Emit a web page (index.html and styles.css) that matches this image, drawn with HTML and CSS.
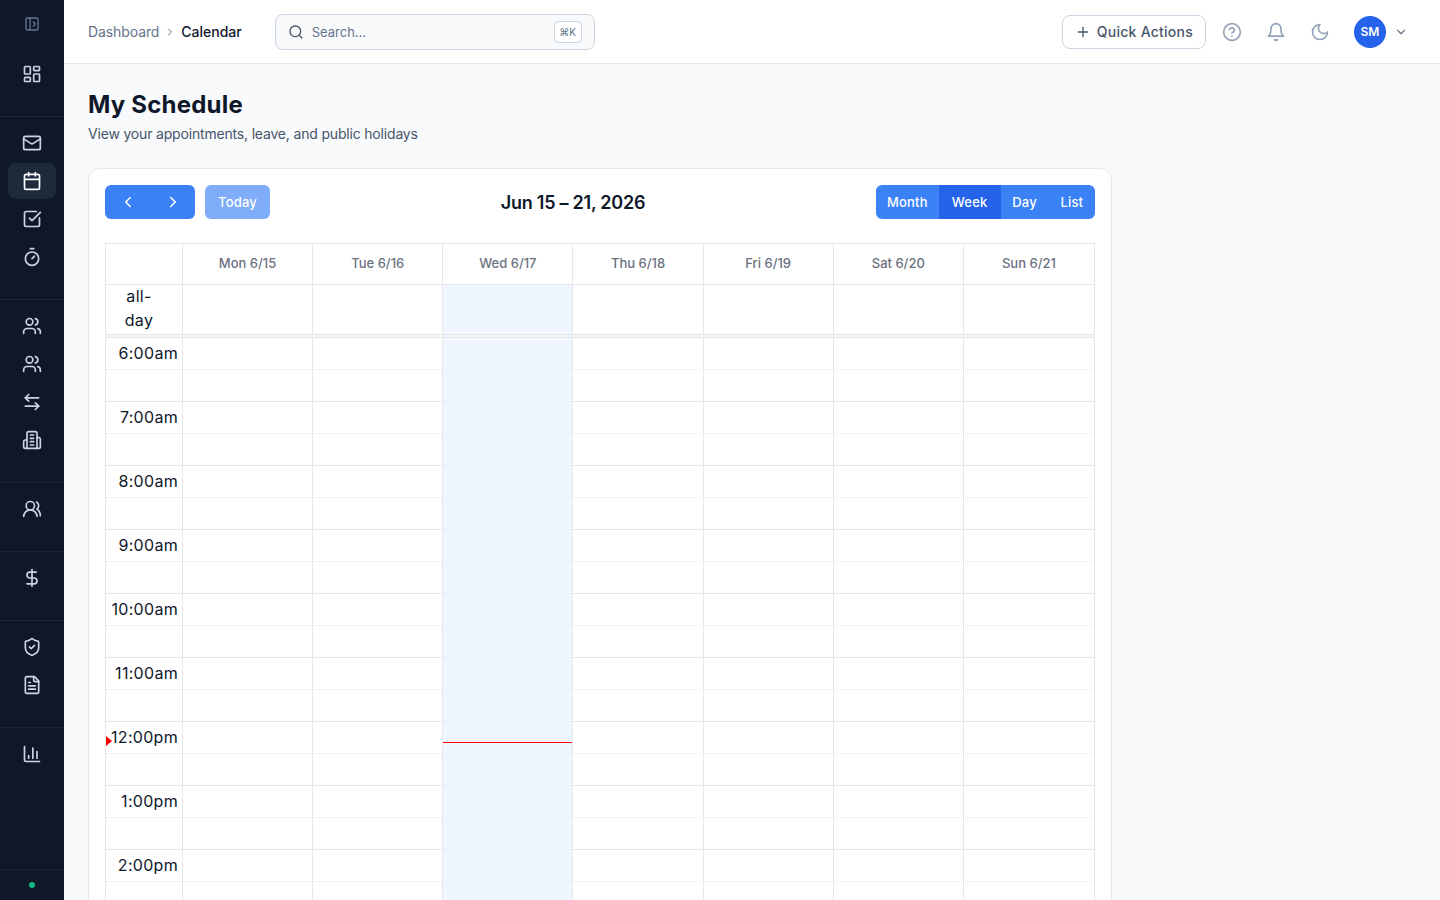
FILE: index.html
```html
<!DOCTYPE html>
<html lang="en">
<head>
    <meta charset="UTF-8">
    <meta name="viewport" content="width=device-width, initial-scale=1.0">
    <title>My Schedule</title>
    <link rel="stylesheet" href="styles.css">
</head>
<body>
    <aside class="sidebar">
        <div class="sidebar-top">
            <svg class="icon toggle-icon" viewBox="0 0 24 24"><rect x="3" y="3" width="18" height="18" rx="2"/><path d="M9 3v18"/><path d="m14 9 3 3-3 3"/></svg>
        </div>
        <nav class="sidebar-nav">
            <div class="nav-group">
                <a class="nav-item"><svg class="icon" viewBox="0 0 24 24"><rect x="3" y="3" width="7" height="9" rx="1"/><rect x="14" y="3" width="7" height="5" rx="1"/><rect x="14" y="12" width="7" height="9" rx="1"/><rect x="3" y="16" width="7" height="5" rx="1"/></svg></a>
            </div>
            <div class="nav-group">
                <a class="nav-item"><svg class="icon" viewBox="0 0 24 24"><rect x="2" y="4" width="20" height="16" rx="2"/><path d="m22 7-8.97 5.7a1.94 1.94 0 0 1-2.06 0L2 7"/></svg></a>
                <a class="nav-item active"><svg class="icon" viewBox="0 0 24 24"><path d="M8 2v4"/><path d="M16 2v4"/><rect x="3" y="4" width="18" height="18" rx="2"/><path d="M3 10h18"/></svg></a>
                <a class="nav-item"><svg class="icon" viewBox="0 0 24 24"><path d="M21 10.656V19a2 2 0 0 1-2 2H5a2 2 0 0 1-2-2V5a2 2 0 0 1 2-2h12.344"/><path d="m9 11 3 3L22 4"/></svg></a>
                <a class="nav-item"><svg class="icon" viewBox="0 0 24 24"><path d="M10 2h4"/><path d="m12 14 3-3"/><circle cx="12" cy="14" r="8"/></svg></a>
            </div>
            <div class="nav-group">
                <a class="nav-item"><svg class="icon" viewBox="0 0 24 24"><path d="M16 21v-2a4 4 0 0 0-4-4H6a4 4 0 0 0-4 4v2"/><circle cx="9" cy="7" r="4"/><path d="M22 21v-2a4 4 0 0 0-3-3.87"/><path d="M16 3.13a4 4 0 0 1 0 7.75"/></svg></a>
                <a class="nav-item"><svg class="icon" viewBox="0 0 24 24"><path d="M16 21v-2a4 4 0 0 0-4-4H6a4 4 0 0 0-4 4v2"/><circle cx="9" cy="7" r="4"/><path d="M22 21v-2a4 4 0 0 0-3-3.87"/><path d="M16 3.13a4 4 0 0 1 0 7.75"/></svg></a>
                <a class="nav-item"><svg class="icon" viewBox="0 0 24 24"><path d="M8 3 4 7l4 4"/><path d="M4 7h16"/><path d="m16 21 4-4-4-4"/><path d="M20 17H4"/></svg></a>
                <a class="nav-item"><svg class="icon" viewBox="0 0 24 24"><path d="M6 22V4a2 2 0 0 1 2-2h8a2 2 0 0 1 2 2v18Z"/><path d="M6 12H4a2 2 0 0 0-2 2v6a2 2 0 0 0 2 2h2"/><path d="M18 9h2a2 2 0 0 1 2 2v9a2 2 0 0 1-2 2h-2"/><path d="M10 6h4"/><path d="M10 10h4"/><path d="M10 14h4"/><path d="M10 18h4"/></svg></a>
            </div>
            <div class="nav-group">
                <a class="nav-item"><svg class="icon" viewBox="0 0 24 24"><path d="M18 21a8 8 0 0 0-16 0"/><circle cx="10" cy="8" r="5"/><path d="M22 20c0-3.37-2-6.5-4-8a5 5 0 0 0-.45-8.3"/></svg></a>
            </div>
            <div class="nav-group">
                <a class="nav-item"><svg class="icon" viewBox="0 0 24 24"><path d="M12 2v20"/><path d="M17 5H9.5a3.5 3.5 0 0 0 0 7h5a3.5 3.5 0 0 1 0 7H6"/></svg></a>
            </div>
            <div class="nav-group">
                <a class="nav-item"><svg class="icon" viewBox="0 0 24 24"><path d="M20 13c0 5-3.5 7.5-7.66 8.95a1 1 0 0 1-.67-.01C7.5 20.5 4 18 4 13V6a1 1 0 0 1 1-1c2 0 4.5-1.2 6.24-2.72a1.17 1.17 0 0 1 1.52 0C14.51 3.81 17 5 19 5a1 1 0 0 1 1 1z"/><path d="m9 12 2 2 4-4"/></svg></a>
                <a class="nav-item"><svg class="icon" viewBox="0 0 24 24"><path d="M15 2H6a2 2 0 0 0-2 2v16a2 2 0 0 0 2 2h12a2 2 0 0 0 2-2V7Z"/><path d="M14 2v4a2 2 0 0 0 2 2h4"/><path d="M10 9H8"/><path d="M16 13H8"/><path d="M16 17H8"/></svg></a>
            </div>
            <div class="nav-group last">
                <a class="nav-item"><svg class="icon" viewBox="0 0 24 24"><path d="M3 3v16a2 2 0 0 0 2 2h16"/><path d="M18 17V9"/><path d="M13 17V5"/><path d="M8 17v-3"/></svg></a>
            </div>
        </nav>
        <div class="sidebar-footer"><span class="status-dot"></span></div>
    </aside>

    <div class="page">
        <header class="topbar">
            <div class="breadcrumb">
                <span class="crumb">Dashboard</span>
                <svg class="icon crumb-sep" viewBox="0 0 24 24"><path d="m9 18 6-6-6-6"/></svg>
                <span class="crumb-current">Calendar</span>
            </div>
            <div class="search">
                <svg class="icon search-icon" viewBox="0 0 24 24"><circle cx="11" cy="11" r="8"/><path d="m21 21-4.3-4.3"/></svg>
                <span class="search-text">Search...</span>
                <kbd class="search-key">⌘K</kbd>
            </div>
            <div class="topbar-right">
                <button class="quick-actions">
                    <svg class="icon" viewBox="0 0 24 24"><path d="M5 12h14"/><path d="M12 5v14"/></svg>
                    Quick Actions
                </button>
                <div class="icon-buttons">
                    <span class="icon-button"><svg class="icon" viewBox="0 0 24 24"><circle cx="12" cy="12" r="10"/><path d="M9.09 9a3 3 0 0 1 5.83 1c0 2-3 3-3 3"/><path d="M12 17h.01"/></svg></span>
                    <span class="icon-button"><svg class="icon" viewBox="0 0 24 24"><path d="M6 8a6 6 0 0 1 12 0c0 7 3 9 3 9H3s3-2 3-9"/><path d="M10.3 21a1.94 1.94 0 0 0 3.4 0"/></svg></span>
                    <span class="icon-button"><svg class="icon" viewBox="0 0 24 24"><path d="M12 3a6 6 0 0 0 9 9 9 9 0 1 1-9-9Z"/></svg></span>
                </div>
                <div class="user-menu">
                    <span class="avatar">SM</span>
                    <svg class="icon user-chevron" viewBox="0 0 24 24"><path d="m6 9 6 6 6-6"/></svg>
                </div>
            </div>
        </header>

        <main class="content">
            <h1 class="page-title">My Schedule</h1>
            <p class="page-subtitle">View your appointments, leave, and public holidays</p>

            <section class="card">
                <div class="toolbar">
                    <div class="toolbar-left">
                        <div class="btn-group">
                            <button class="btn btn-arrow"><svg class="icon" viewBox="0 0 24 24"><path d="m15 18-6-6 6-6"/></svg></button>
                            <button class="btn btn-arrow"><svg class="icon" viewBox="0 0 24 24"><path d="m9 18 6-6-6-6"/></svg></button>
                        </div>
                        <button class="btn btn-today">Today</button>
                    </div>
                    <h2 class="toolbar-title">Jun 15 – 21, 2026</h2>
                    <div class="btn-group">
                        <button class="btn btn-month">Month</button>
                        <button class="btn btn-active">Week</button>
                        <button class="btn">Day</button>
                        <button class="btn">List</button>
                    </div>
                </div>

                <div class="calendar">
                    <div class="cal-row cal-head">
                        <div class="cal-cell"></div>
                        <div class="cal-cell">Mon 6/15</div>
                        <div class="cal-cell">Tue 6/16</div>
                        <div class="cal-cell">Wed 6/17</div>
                        <div class="cal-cell">Thu 6/18</div>
                        <div class="cal-cell">Fri 6/19</div>
                        <div class="cal-cell">Sat 6/20</div>
                        <div class="cal-cell">Sun 6/21</div>
                    </div>
                    <div class="cal-row cal-allday">
                        <div class="cal-cell"><div class="allday-label">all-day</div></div>
                        <div class="cal-cell"></div>
                        <div class="cal-cell"></div>
                        <div class="cal-cell today"></div>
                        <div class="cal-cell"></div>
                        <div class="cal-cell"></div>
                        <div class="cal-cell"></div>
                        <div class="cal-cell"></div>
                    </div>
                    <div class="cal-divider"></div>
                    <div class="time-grid">
                        <div class="slot"><span class="slot-label">6:00am</span></div>
                        <div class="slot slot-minor"></div>
                        <div class="slot"><span class="slot-label">7:00am</span></div>
                        <div class="slot slot-minor"></div>
                        <div class="slot"><span class="slot-label">8:00am</span></div>
                        <div class="slot slot-minor"></div>
                        <div class="slot"><span class="slot-label">9:00am</span></div>
                        <div class="slot slot-minor"></div>
                        <div class="slot"><span class="slot-label">10:00am</span></div>
                        <div class="slot slot-minor"></div>
                        <div class="slot"><span class="slot-label">11:00am</span></div>
                        <div class="slot slot-minor"></div>
                        <div class="slot"><span class="slot-label">12:00pm</span></div>
                        <div class="slot slot-minor"></div>
                        <div class="slot"><span class="slot-label">1:00pm</span></div>
                        <div class="slot slot-minor"></div>
                        <div class="slot"><span class="slot-label">2:00pm</span></div>
                        <div class="slot slot-minor"></div>

                        <!-- columns sit over the slot rows -->
                        <div class="cal-row col-overlay">
                            <div class="cal-cell"></div>
                            <div class="cal-cell"></div>
                            <div class="cal-cell"></div>
                            <div class="cal-cell today"><div class="now-line"></div></div>
                            <div class="cal-cell"></div>
                            <div class="cal-cell"></div>
                            <div class="cal-cell"></div>
                            <div class="cal-cell"></div>
                        </div>
                        <div class="now-arrow"></div>
                    </div>
                </div>
            </section>
        </main>
    </div>
</body>
</html>
```

FILE: styles.css
```css
* {
    box-sizing: border-box;
}
body {
    margin: 0;
    height: 100vh;
    display: flex;
    overflow: hidden;
    font-family: Inter, "Noto Sans", sans-serif;
    color: #0f172a;
    background-color: #f8fafc;
}
.icon {
    width: 20px;
    height: 20px;
    fill: none;
    stroke: currentColor;
    stroke-width: 2;
    stroke-linecap: round;
    stroke-linejoin: round;
    flex-shrink: 0;
}

/* Sidebar */
.sidebar {
    width: 64px;
    flex-shrink: 0;
    display: flex;
    flex-direction: column;
    background-color: #0f182b;
    color: #cbd5e1;
}
.sidebar-top {
    height: 48px;
    display: flex;
    justify-content: center;
    align-items: center;
}
.toggle-icon {
    width: 16px;
    height: 16px;
    color: #64748b;
}
.sidebar-nav {
    flex: 1;
}
.nav-group {
    display: flex;
    flex-direction: column;
    gap: 2px;
    padding: 8px 8px 24px;
    border-bottom: 1px solid #1c2739;
}
.nav-group.last {
    border-bottom: none;
}
.nav-item {
    height: 36px;
    display: flex;
    justify-content: center;
    align-items: center;
    border-radius: 8px;
}
.nav-item.active {
    background-color: #1e293b;
    color: #fff;
}
.sidebar-footer {
    height: 31px;
    display: flex;
    justify-content: center;
    align-items: center;
    border-top: 1px solid #1c2739;
}
.status-dot {
    width: 6px;
    height: 6px;
    border-radius: 50%;
    background-color: #10b981;
}

/* Topbar */
.page {
    flex: 1;
    min-width: 0;
}
.topbar {
    height: 64px;
    display: flex;
    align-items: center;
    padding: 0 24px;
    background-color: #fff;
    border-bottom: 1px solid #e2e8f0;
}
.breadcrumb {
    display: flex;
    align-items: center;
    gap: 5px;
    font-size: 14px;
    margin-right: 33px;
}
.crumb {
    color: #64748b;
    letter-spacing: -0.1px;
}
.crumb-sep {
    width: 12px;
    height: 12px;
    color: #64748b;
}
.crumb-current {
    font-weight: 500;
}
.search {
    width: 320px;
    height: 36px;
    display: flex;
    align-items: center;
    gap: 8px;
    padding: 0 12px;
    background-color: #f8fafc;
    border: 1px solid #cbd5e1;
    border-radius: 8px;
    font-size: 13px;
    color: #64748b;
}
.search-icon {
    width: 16px;
    height: 16px;
    color: #475569;
}
.search-text {
    flex: 1;
}
.search-key {
    width: 28px;
    height: 22px;
    display: flex;
    justify-content: center;
    align-items: center;
    font-family: Inter, sans-serif;
    font-size: 10px;
    background-color: #fff;
    border: 1px solid #cbd5e1;
    border-radius: 4px;
}
.topbar-right {
    margin-left: auto;
    display: flex;
    align-items: center;
}
.quick-actions {
    height: 34px;
    display: flex;
    align-items: center;
    gap: 6px;
    padding: 0 12px;
    font-family: inherit;
    font-size: 14px;
    font-weight: 500;
    letter-spacing: 0.25px;
    color: #475569;
    background-color: #fff;
    border: 1px solid #cbd5e1;
    border-radius: 8px;
}
.quick-actions .icon {
    width: 16px;
    height: 16px;
}
.icon-buttons {
    display: flex;
    gap: 8px;
    margin-left: 8px;
}
.icon-button {
    width: 36px;
    height: 36px;
    display: flex;
    justify-content: center;
    align-items: center;
    color: #94a3b8;
}
.user-menu {
    display: flex;
    align-items: center;
    gap: 8px;
    margin-left: 8px;
    padding: 0 8px;
}
.avatar {
    width: 32px;
    height: 32px;
    display: flex;
    justify-content: center;
    align-items: center;
    border-radius: 50%;
    background-color: #2563eb;
    color: #fff;
    font-size: 12px;
    font-weight: 600;
}
.user-chevron {
    width: 14px;
    height: 14px;
    color: #64748b;
}

/* Content */
.content {
    padding: 25px 24px 24px;
}
.page-title {
    margin: 0;
    font-size: 24px;
    line-height: 32px;
    font-weight: 700;
    letter-spacing: 0.2px;
}
.page-subtitle {
    margin: 3px 0 24px;
    font-size: 14px;
    line-height: 20px;
    letter-spacing: -0.18px;
    color: #475569;
}
.card {
    max-width: 1024px;
    padding: 16px;
    background-color: #fff;
    border: 1px solid #e2e8f0;
    border-radius: 12px;
}
.toolbar {
    display: flex;
    justify-content: space-between;
    align-items: center;
    margin-bottom: 24px;
}
.toolbar-left {
    display: flex;
    gap: 10px;
}
.toolbar-title {
    margin: 0;
    font-size: 18px;
    font-weight: 600;
    letter-spacing: -0.25px;
}
.btn-group {
    display: flex;
    border-radius: 6px;
    overflow: hidden;
}
.btn {
    height: 34px;
    padding: 0 11.75px;
    font-family: inherit;
    font-size: 13px;
    font-weight: 500;
    letter-spacing: 0.2px;
    color: #fff;
    background-color: #3b82f6;
    border: none;
}
.btn-arrow {
    width: 45px;
    padding: 0;
    display: flex;
    justify-content: center;
    align-items: center;
}
.btn-arrow .icon {
    width: 18px;
    height: 18px;
}
.btn-today {
    padding: 0 13px;
    border-radius: 6px;
    opacity: 0.65;
}
.btn-month {
    padding: 0 11px;
}
.btn-active {
    padding: 0 13px;
    background-color: #2563eb;
}

/* Calendar */
.calendar {
    border: 1px solid #e5e7eb;
    border-bottom: none;
}
.cal-row {
    display: grid;
    grid-template-columns: 77px repeat(7, 1fr);
}
.cal-cell {
    border-right: 1px solid #e5e7eb;
}
.cal-cell:last-child {
    border-right: none;
}
.cal-head {
    height: 41px;
    border-bottom: 1px solid #e5e7eb;
}
.cal-head .cal-cell {
    display: flex;
    justify-content: center;
    align-items: center;
    padding-bottom: 2px;
    font-size: 13px;
    font-weight: 500;
    color: #6b7280;
}
.cal-allday {
    height: 50px;
    border-bottom: 1px solid #e5e7eb;
}
.allday-label {
    width: 50px;
    margin: -1px 0 0 8px;
    font-size: 16px;
    line-height: 24px;
    letter-spacing: 0.3px;
    text-align: center;
}
.today {
    background-color: rgba(235, 244, 255, 0.8);
}
.cal-divider {
    height: 3px;
    background-color: #f3f4f6;
    border-bottom: 1px solid #e5e7eb;
}
.time-grid {
    position: relative;
}
.slot {
    height: 32px;
    border-bottom: 1px dotted #e5e7eb;
}
.slot-minor {
    border-bottom: 1px solid #e5e7eb;
}
.slot-label {
    display: block;
    width: 76px;
    padding-right: 4px;
    font-size: 16px;
    line-height: 31px;
    letter-spacing: 0.3px;
    text-align: right;
}
.col-overlay {
    position: absolute;
    top: 0;
    left: 0;
    right: 0;
    bottom: 0;
}
.now-line {
    position: absolute;
    top: 404px;
    width: 129px;
    height: 1px;
    background-color: #f00;
}
.now-arrow {
    position: absolute;
    top: 398px;
    left: 0;
    border-style: solid;
    border-width: 5.5px 0 5.5px 6px;
    border-color: transparent transparent transparent #f00;
}
```
